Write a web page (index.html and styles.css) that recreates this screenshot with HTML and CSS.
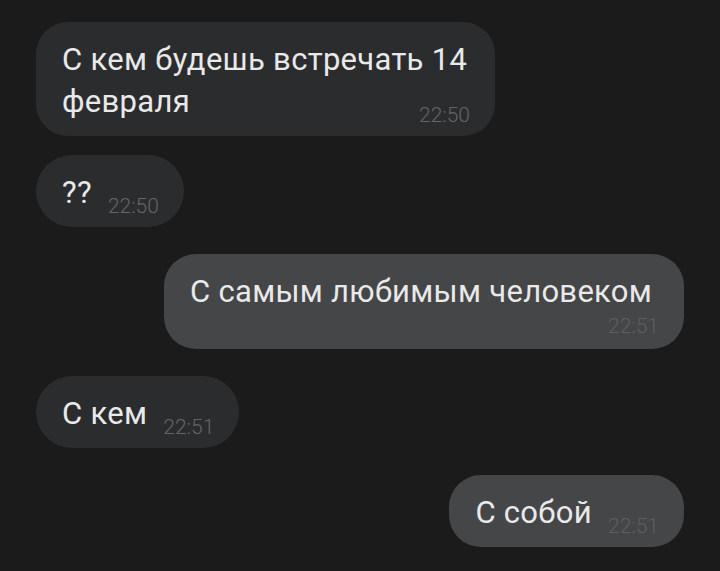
FILE: index.html
```html
<!DOCTYPE html>
<html lang="ru">
<head>
<meta charset="utf-8">
<link rel="stylesheet" href="styles.css">
</head>
<body>
<div class="chat">
  <div class="bubble in first">
    <span class="text">С кем будешь встречать 14 февраля</span><span class="time">22:50</span>
  </div>
  <div class="bubble in">
    <span class="text">??</span><span class="time">22:50</span>
  </div>
  <div class="bubble out stacked">
    <span class="text">С самым любимым человеком</span><span class="time">22:51</span>
  </div>
  <div class="bubble in">
    <span class="text">С кем</span><span class="time">22:51</span>
  </div>
  <div class="bubble out">
    <span class="text">С собой</span><span class="time">22:51</span>
  </div>
</div>
</body>
</html>
```
FILE: styles.css
```css
html, body {
  margin: 0;
  padding: 0;
  background: #1b1b1b;
}
body {
  width: 720px;
  height: 571px;
  overflow: hidden;
  font-family: Roboto, "Noto Sans", sans-serif;
}
.chat {
  display: flex;
  flex-direction: column;
  align-items: flex-start;
  gap: 27px;
  padding: 22px 36px 0 36px;
}
.bubble {
  display: flow-root;
  box-sizing: border-box;
  padding: 17px 25px 13px 26px;
  border-radius: 36px;
  font-size: 31px;
  line-height: 42px;
  letter-spacing: 0.3px;
  color: #e9e9e9;
}
.bubble.first {
  margin-bottom: -8px;
  border-radius: 32px;
}
.in {
  background: #2b2c2e;
  max-width: 459px;
}
.out {
  background: #454648;
  align-self: flex-end;
  border-radius: 32px;
  max-width: 520px;
}
.time {
  float: right;
  margin: 26px 0 0 16px;
  font-size: 21px;
  line-height: 16px;
  font-weight: 300;
  letter-spacing: 0;
  color: #646567;
}
.out .time {
  color: #5e5f61;
}
.stacked .time {
  margin: 5px 0 2px 16px;
}
```
